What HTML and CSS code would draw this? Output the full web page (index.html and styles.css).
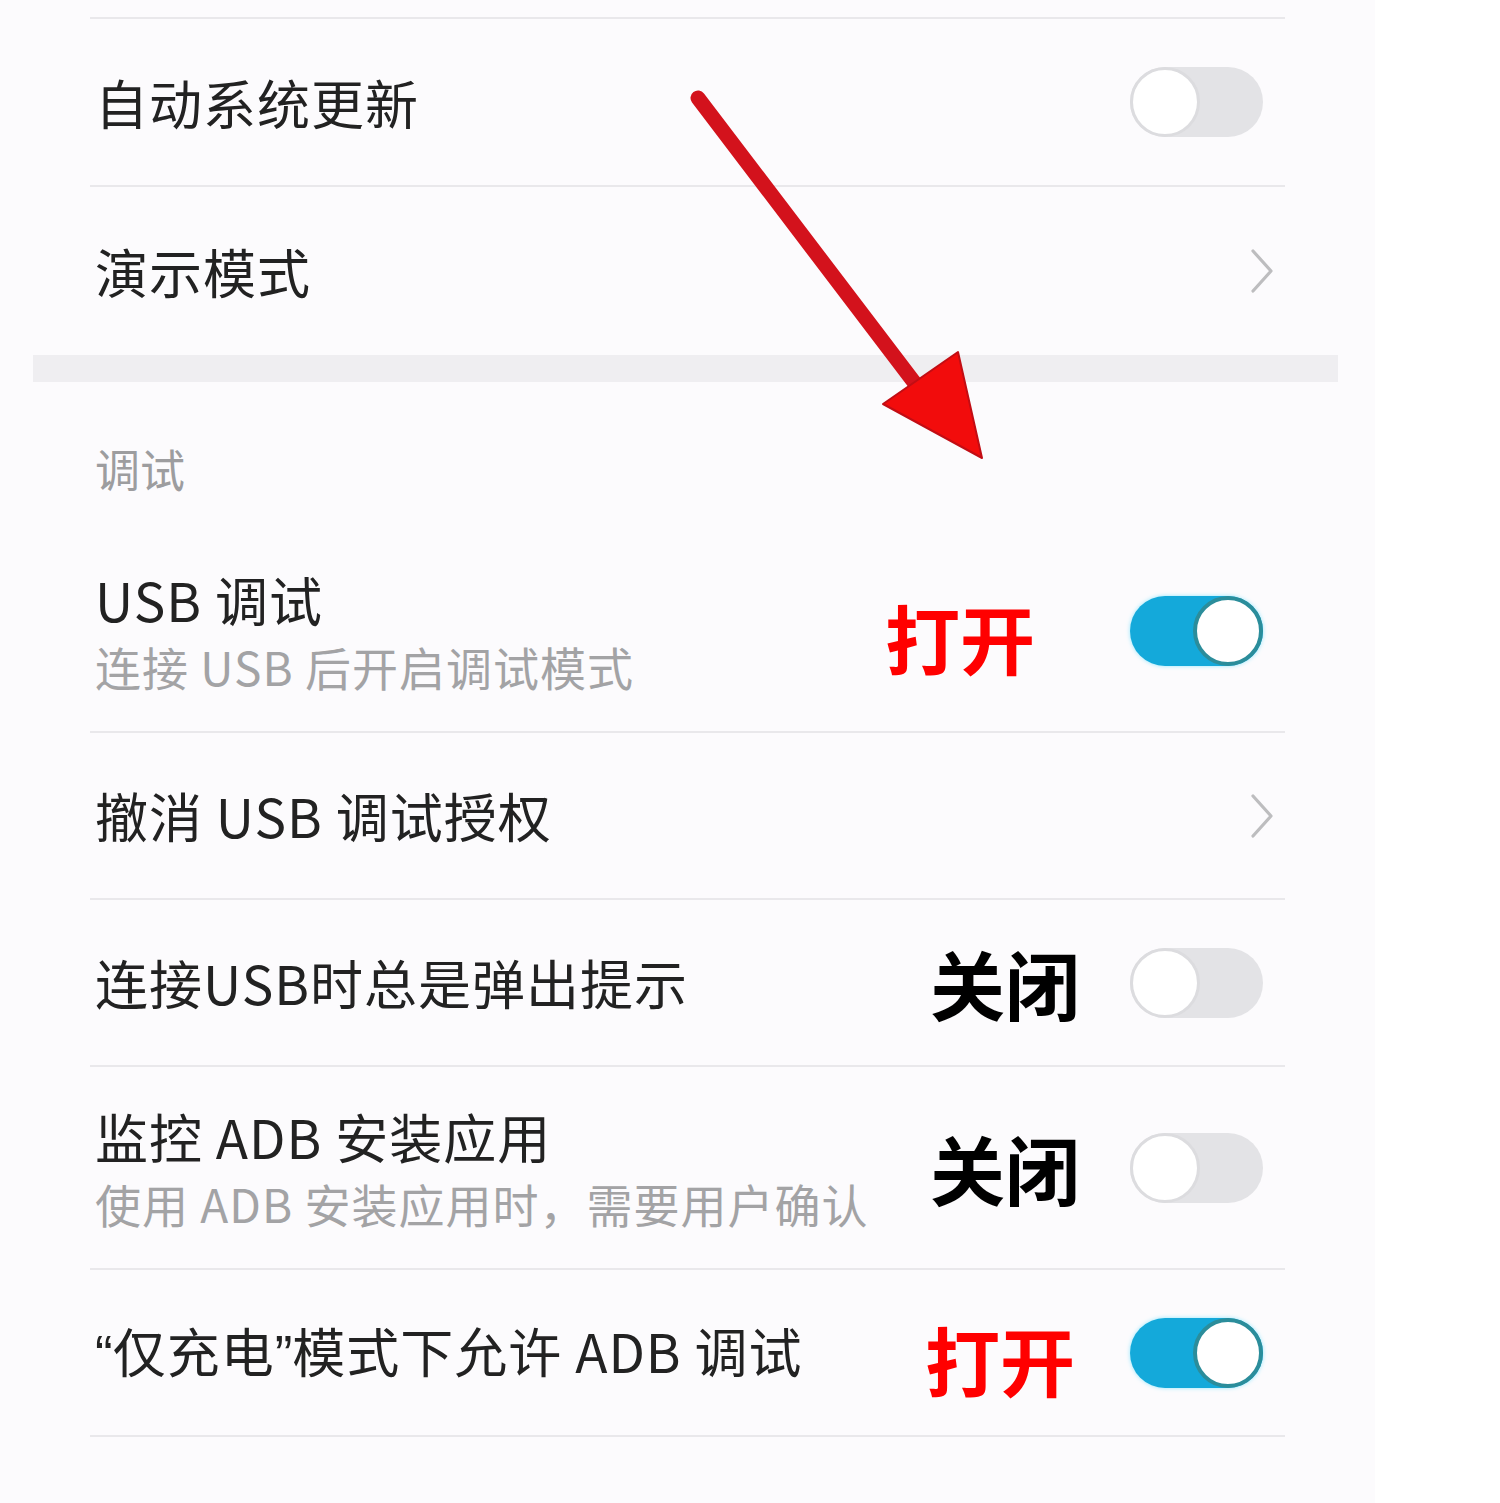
FILE: index.html
```html
<!DOCTYPE html>
<html lang="zh-CN">
<head>
<meta charset="utf-8">
<title>开发者选项</title>
<link rel="stylesheet" href="styles.css">
</head>
<body>
<div class="page">
  <div class="list">
    <div class="divider"></div>
    <div class="row">
      <div class="title">自动系统更新</div>
      <div class="ctrl"><span class="toggle off"><span class="knob"></span></span></div>
    </div>
    <div class="row last">
      <div class="title">演示模式</div>
      <div class="ctrl"><svg class="chev" width="30" height="48" viewBox="0 0 30 48"><path d="M6 4 L24 24 L6 44" fill="none" stroke="#bdbdbf" stroke-width="3.2" stroke-linecap="round" stroke-linejoin="round"/></svg></div>
    </div>
  </div>

  <div class="gap-bar"></div>

  <div class="list">
    <div class="header">调试</div>
    <div class="row tall">
      <div class="texts">
        <div class="title">USB 调试</div>
        <div class="sub">连接 USB 后开启调试模式</div>
      </div>
      <div class="ctrl"><span class="tag red wide">打开</span><span class="toggle on"><span class="knob"></span></span></div>
    </div>
    <div class="row">
      <div class="title">撤消 USB 调试授权</div>
      <div class="ctrl"><svg class="chev" width="30" height="48" viewBox="0 0 30 48"><path d="M6 4 L24 24 L6 44" fill="none" stroke="#bdbdbf" stroke-width="3.2" stroke-linecap="round" stroke-linejoin="round"/></svg></div>
    </div>
    <div class="row">
      <div class="title">连接USB时总是弹出提示</div>
      <div class="ctrl"><span class="tag black">关闭</span><span class="toggle off"><span class="knob"></span></span></div>
    </div>
    <div class="row tall">
      <div class="texts">
        <div class="title">监控 ADB 安装应用</div>
        <div class="sub">使用 ADB 安装应用时，需要用户确认</div>
      </div>
      <div class="ctrl"><span class="tag black">关闭</span><span class="toggle off"><span class="knob"></span></span></div>
    </div>
    <div class="row">
      <div class="title"><span class="q">“</span>仅充电<span class="q">”</span>模式下允许 ADB 调试</div>
      <div class="ctrl"><span class="tag red">打开</span><span class="toggle on"><span class="knob"></span></span></div>
    </div>
  </div>

  <svg class="arrow" width="1500" height="1503" viewBox="0 0 1500 1503">
    <line x1="698" y1="98" x2="920" y2="390" stroke="#d3121c" stroke-width="15" stroke-linecap="round"/>
    <polygon points="883,404 958,352 982,458" fill="#f20c0c" stroke="#c20d14" stroke-width="2" stroke-linejoin="round"/>
  </svg>
</div>
</body>
</html>
```

FILE: styles.css
```css
html, body {
  margin: 0;
  padding: 0;
  background: #ffffff;
}

body {
  font-family: "Noto Sans CJK SC", "Noto Sans", sans-serif;
  color: #262626;
}

.page {
  position: relative;
  width: 1375px;
  height: 1503px;
  background: #fcfbfd;
  overflow: hidden;
}

.list {
  display: flex;
  flex-direction: column;
}

.divider {
  margin: 17px 0 0 90px;
  width: 1195px;
  height: 2px;
  background: #e9e8eb;
}

.row {
  box-sizing: border-box;
  margin-left: 90px;
  width: 1195px;
  height: 167px;
  padding: 0 22px 0 5px;
  display: flex;
  align-items: center;
  justify-content: space-between;
  border-bottom: 2px solid #e9e8eb;
}

.list:first-child .row {
  height: 168px;
}

.row.last {
  border-bottom: none;
}

.row.tall {
  height: 203px;
}

.title {
  font-size: 53px;
  line-height: 67px;
  letter-spacing: 1px;
  color: #222222;
  white-space: nowrap;
}

.q {
  font-family: "Liberation Sans", "Noto Sans", sans-serif;
  letter-spacing: 0;
}

.sub {
  font-size: 46px;
  line-height: 67px;
  letter-spacing: 1px;
  color: #a3a3a5;
  white-space: nowrap;
}

.texts {
  display: flex;
  flex-direction: column;
  padding-top: 4px;
}

.ctrl {
  display: flex;
  align-items: center;
}

.chev {
  margin-right: -14px;
  display: block;
}

.gap-bar {
  margin-left: 33px;
  width: 1305px;
  height: 27px;
  background: #efeef1;
}

.header {
  box-sizing: border-box;
  height: 148px;
  padding: 64px 0 0 95px;
  font-size: 45px;
  line-height: 45px;
  color: #9d9d9f;
}

.toggle {
  box-sizing: border-box;
  position: relative;
  display: flex;
  align-items: center;
  width: 133px;
  height: 70px;
  border-radius: 35px;
}

.toggle.off {
  background: #e3e3e6;
  justify-content: flex-start;
}

.toggle.on {
  background: #14a9da;
  justify-content: flex-end;
  box-shadow: 0 0 4px rgba(80, 220, 255, 0.6);
}

.knob {
  box-sizing: border-box;
  width: 70px;
  height: 70px;
  border-radius: 50%;
  background: #ffffff;
}

.toggle.off .knob {
  border: 3px solid #dcdcdf;
}

.toggle.on .knob {
  border: 4px solid #2b8d9b;
}

.tag {
  font-size: 75px;
  line-height: 80px;
  font-weight: 700;
  margin-right: 50px;
  white-space: nowrap;
}

.tag.red {
  color: #ff0000;
  margin-right: 55px;
  margin-top: 12px;
}

.tag.red.wide {
  margin-right: 95px;
}

.tag.black {
  color: #000000;
}

.arrow {
  position: absolute;
  left: 0;
  top: 0;
  pointer-events: none;
}
```
